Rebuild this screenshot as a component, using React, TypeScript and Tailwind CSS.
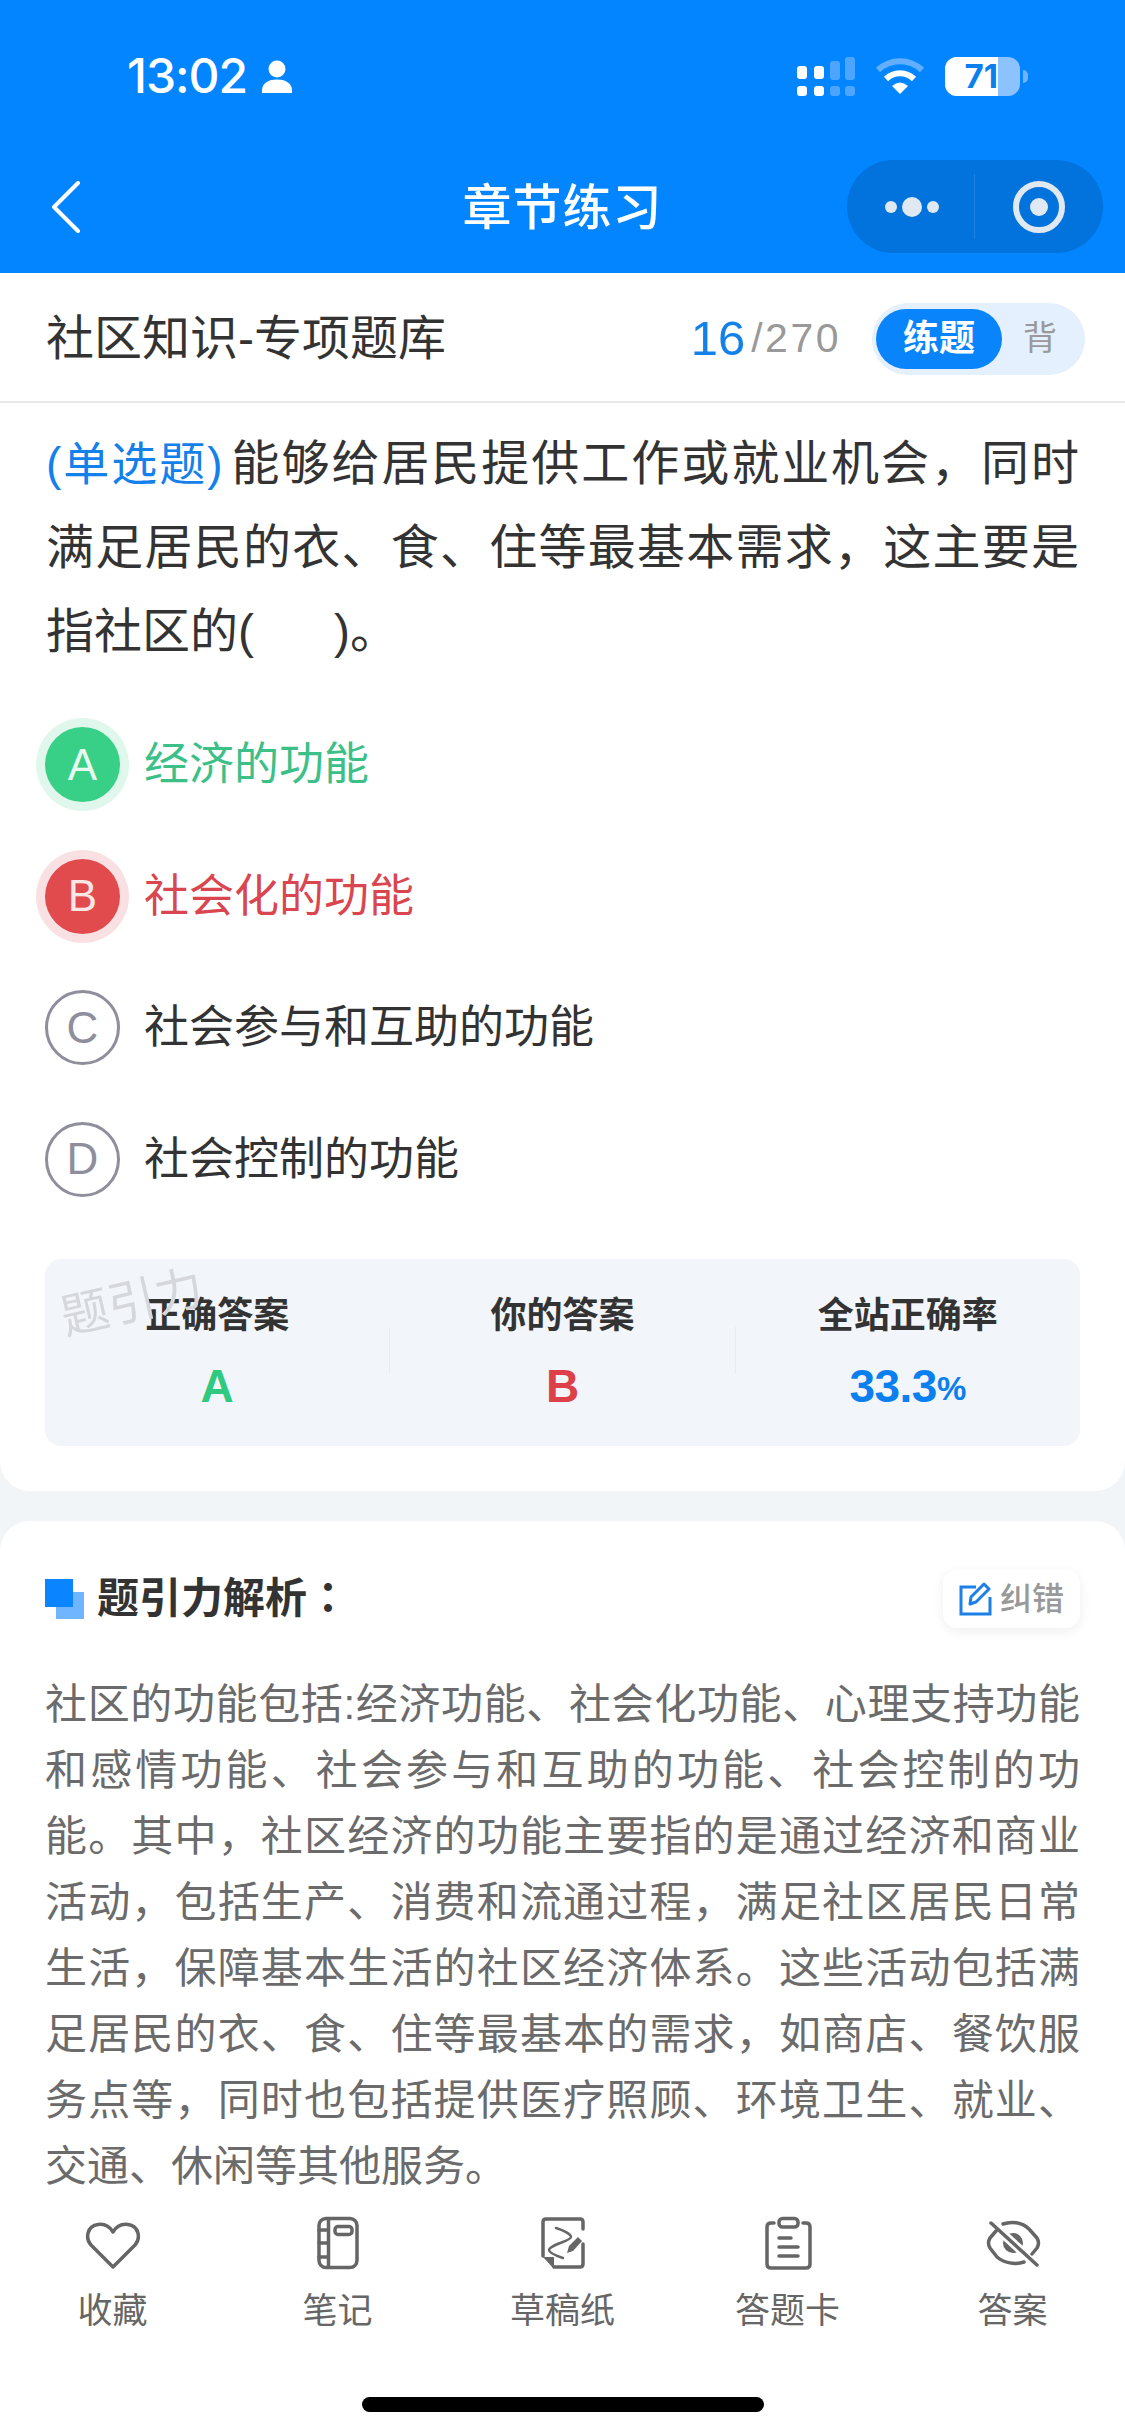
const options = [
    { key: "A", text: "经济的功能", state: "right" },
    { key: "B", text: "社会化的功能", state: "wrong" },
    { key: "C", text: "社会参与和互助的功能", state: "idle" },
    { key: "D", text: "社会控制的功能", state: "idle" },
];

const COMMA = "\uFF0C";
const COLON = "\uFF1A";

const question = `能够给居民提供工作或就业机会${COMMA}同时满足居民的衣、食、住等最基本需求${COMMA}这主要是指社区的(\u00A0\u00A0\u00A0\u00A0\u00A0\u00A0)。`;

const explanation = `社区的功能包括:经济功能、社会化功能、心理支持功能和感情功能、社会参与和互助的功能、社会控制的功能。其中${COMMA}社区经济的功能主要指的是通过经济和商业活动${COMMA}包括生产、消费和流通过程${COMMA}满足社区居民日常生活${COMMA}保障基本生活的社区经济体系。这些活动包括满足居民的衣、食、住等最基本的需求${COMMA}如商店、餐饮服务点等${COMMA}同时也包括提供医疗照顾、环境卫生、就业、交通、休闲等其他服务。`;

const StatusBar = () => (
    <div className="flex h-[40px] items-center justify-between pl-[127px] pr-[105px]">
        <div className="flex items-center gap-[14px]">
            <span className="font-['Inter',sans-serif] text-[48px] leading-[40px] font-medium tracking-[-1px] text-white">13:02</span>
            <svg width="32" height="33" viewBox="0 0 32 33" fill="#fff">
                <circle cx="16" cy="9" r="8.5" />
                <path d="M1 33 C0 24 6 19.5 16 19.5 C26 19.5 32 24 31 33 Z" />
            </svg>
        </div>
        <div className="flex items-center">
            <svg width="58" height="39" viewBox="0 0 58 39" className="mr-[20px]">
                <rect x="0" y="9" width="10" height="13" rx="3" fill="#fff" />
                <rect x="0" y="29" width="10" height="10" rx="3" fill="#fff" />
                <rect x="17" y="9" width="10" height="13" rx="3" fill="#fff" />
                <rect x="17" y="29" width="10" height="10" rx="3" fill="#fff" />
                <rect x="33" y="4" width="10" height="19" rx="3" fill="#4ea5ff" />
                <rect x="33" y="29" width="10" height="10" rx="3" fill="#4ea5ff" />
                <rect x="48" y="0" width="10" height="23" rx="3" fill="#4ea5ff" />
                <rect x="48" y="29" width="10" height="10" rx="3" fill="#4ea5ff" />
            </svg>
            <svg width="50" height="36" viewBox="0 0 50 36" fill="none" className="mr-[20px]">
                <path d="M3 12 A32 32 0 0 1 47 12" stroke="#62aeff" strokeWidth="6" />
                <path d="M11 21 A20 20 0 0 1 39 21" stroke="#fff" strokeWidth="6" />
                <path d="M17 28 Q25 21 33 28 L25 36 Z" fill="#fff" />
            </svg>
            <div className="relative h-[39px] w-[75px] overflow-visible rounded-[12px] bg-[#8cc3ff]">
                <div className="flex h-full w-[53px] items-center justify-end rounded-l-[12px] bg-white">
                    <span className="font-['Inter',sans-serif] text-[33px] leading-none font-bold text-[#0b7fee]">71</span>
                </div>
                <div className="absolute top-[13px] right-[-8px] h-[13px] w-[5px] rounded-r-full bg-[#6fb4ff]"></div>
            </div>
        </div>
    </div>
);

const Header = () => (
    <header className="h-[273px] bg-[#0285ff] pt-[56px]">
        <StatusBar />
        <div className="mt-[64px] grid h-[93px] grid-cols-[1fr_auto_1fr] items-center">
            <div className="pl-[50px]">
                <svg width="30" height="52" viewBox="0 0 30 52" fill="none">
                    <path d="M28 2 L4 26 L28 50" stroke="#fff" strokeWidth="4" strokeLinecap="round" strokeLinejoin="round" />
                </svg>
            </div>
            <h1 className="pt-[5px] text-[49px] font-medium tracking-[1px] text-white">章节练习</h1>
            <div className="flex justify-end pr-[22px]">
                <div className="flex h-[93px] w-[256px] items-center rounded-full bg-[#0272dd]">
                    <div className="flex h-[65px] w-[128px] items-center justify-center gap-[5px] border-r border-[#1d83e6] pl-[2px]">
                        <span className="h-[12px] w-[12px] rounded-full bg-[#e0e8f2]"></span>
                        <span className="h-[20px] w-[20px] rounded-full bg-[#e0e8f2]"></span>
                        <span className="h-[12px] w-[12px] rounded-full bg-[#e0e8f2]"></span>
                    </div>
                    <div className="flex flex-1 items-center justify-center">
                        <div className="flex h-[52px] w-[52px] items-center justify-center rounded-full border-[6px] border-[#e0e8f2]">
                            <span className="h-[18px] w-[18px] rounded-full bg-[#e0e8f2]"></span>
                        </div>
                    </div>
                </div>
            </div>
        </div>
    </header>
);

const SubHeader = () => (
    <div className="flex h-[130px] items-center justify-between border-b-2 border-[#e8e8e8] bg-white pt-[3px] pr-[40px] pl-[46px]">
        <span className="text-[48px] text-[#333]">社区知识-专项题库</span>
        <div className="flex items-center">
            <span className="text-[49px] leading-none text-[#1480ea]">16</span>
            <span className="ml-[6px] text-[41px] leading-none tracking-[2.5px] text-[#999]">/270</span>
            <div className="ml-[31px] flex h-[72px] w-[213px] items-center rounded-full bg-[#e4f0fd] pl-[4px]">
                <span className="flex h-[60px] w-[126px] items-center justify-center rounded-full bg-[#0a84fb] text-[36px] font-bold text-white">练题</span>
                <span className="ml-[21px] text-[34px] text-[#999]">背</span>
            </div>
        </div>
    </div>
);

const OptionRow = ({ option }: { option: (typeof options)[number] }) => {
    let circle = "border-[3px] border-[#8e8e9c] text-[#8e8e9c]";
    let label = "text-[#333]";
    if (option.state === "right") {
        circle = "bg-[#37d086] text-[#e6faf0] shadow-[0_0_0_9px_#e0f7ec]";
        label = "text-[#3cc088]";
    }
    if (option.state === "wrong") {
        circle = "bg-[#e14b4d] text-[#fbe6e6] shadow-[0_0_0_9px_#f9e1e3]";
        label = "text-[#d9464f]";
    }
    return (
        <div className="flex h-[131.5px] items-center pl-[45px]">
            <span className={`flex h-[75px] w-[75px] shrink-0 items-center justify-center rounded-full text-[44px] ${circle}`}>{option.key}</span>
            <span className={`ml-[24px] text-[45px] ${label}`}>{option.text}</span>
        </div>
    );
};

const Stat = ({ title, children }: { title: string; children: React.ReactNode }) => (
    <div className="flex flex-col items-center pt-[37px]">
        <span className="text-[36px] leading-[40px] font-bold text-[#333]">{title}</span>
        <div className="mt-[25px] flex h-[50px] items-center font-bold">{children}</div>
    </div>
);

const QuestionCard = () => (
    <section className="rounded-b-[30px] bg-white pb-[45px]">
        <p className="px-[46px] pt-[19px] text-justify text-[48px] leading-[84px] text-[#333]">
            <span className="mr-[7px] text-[46px] text-[#1480ea]">(单选题)</span>{question}
        </p>
        <div className="mt-[25px]">
            {options.map((option) => (
                <OptionRow key={option.key} option={option} />
            ))}
        </div>
        <div className="relative mx-[45px] mt-[34px] grid h-[187px] grid-cols-[1fr_1px_1fr_1px_1fr] rounded-[16px] bg-[#f2f5f9]">
            <span className="absolute top-[14px] left-[15px] rotate-[-13deg] text-[48px] leading-[60px] text-[#d5d7db]">题引力</span>
            <Stat title="正确答案">
                <span className="text-[46px] text-[#2fc97f]">A</span>
            </Stat>
            <div className="mt-[68px] h-[47px] bg-[#e9edf1]"></div>
            <Stat title="你的答案">
                <span className="text-[46px] text-[#dd4049]">B</span>
            </Stat>
            <div className="mt-[68px] h-[47px] bg-[#e9edf1]"></div>
            <Stat title="全站正确率">
                <span className="text-[46px] tracking-[-0.5px] text-[#0a7fee]">33.3</span>
                <span className="mt-[6px] text-[33px] font-semibold text-[#0a7fee]">%</span>
            </Stat>
        </div>
    </section>
);

const AnalysisCard = () => (
    <section className="mt-[30px] h-[700px] rounded-t-[30px] bg-white px-[45px] pt-[48px]">
        <div className="flex h-[60px] items-center justify-between">
            <div className="flex items-center">
                <svg width="39" height="40" viewBox="0 0 39 40">
                    <rect x="11" y="13" width="28" height="27" fill="#70b5ff" />
                    <rect x="0" y="0" width="28" height="28" fill="#0a84ff" />
                </svg>
                <h2 className="ml-[13px] pb-[5px] text-[42px] font-bold text-[#333]">
                    题引力解析<span className="font-['Noto_Sans_CJK_TC',sans-serif]">{COLON}</span>
                </h2>
            </div>
            <button className="flex h-[58px] w-[137px] items-center justify-center gap-[8px] rounded-[14px] bg-white shadow-[0_3px_12px_rgba(0,0,0,0.07)]">
                <svg width="33" height="34" viewBox="0 0 33 34" fill="none" stroke="#1c80e8" strokeWidth="3">
                    <path d="M17 5 H2 V32 H31 V15" />
                    <path d="M11 22 L12 15 L25 2 L30 7 L17 20 Z" strokeLinejoin="round" />
                </svg>
                <span className="text-[32px] font-medium text-[#999]">纠错</span>
            </button>
        </div>
        <p className="mt-[43px] text-justify text-[42px] leading-[66px] text-[#6b6b6b]">{explanation}</p>
    </section>
);

const stroke = { fill: "none", stroke: "#666", strokeWidth: 3.5, strokeLinecap: "round", strokeLinejoin: "round" } as const;

const tabs = [
    {
        label: "收藏",
        icon: <path {...stroke} d="M28 51 L6 29 C0 22 2 10 13 8.5 C20 7.5 25 11 28 16 C31 11 36 7.5 43 8.5 C54 10 56 22 50 29 Z" />,
    },
    {
        label: "笔记",
        icon: (
            <g {...stroke}>
                <rect x="9" y="2.5" width="38" height="49" rx="7" />
                <path d="M18.5 3 V51 M9 14 H18.5 M9 27 H18.5 M9 41 H18.5" />
                <rect x="25" y="10.5" width="17" height="8" rx="3" />
            </g>
        ),
    },
    {
        label: "草稿纸",
        icon: (
            <g>
                <path {...stroke} d="M8 40 V6 Q8 3 11 3 H45 Q48 3 48 6 V13 M48 28 V48 Q48 51 45 51 H19" />
                <path d="M8 41 H19 V53 Z" fill="#666" />
                <path {...stroke} strokeWidth={2.5} d="M21 12 C28 14 36 18 36 21 C36 25 14 29 14 34 C14 37 22 40 28 42" />
                <path d="M32 37 L34 30 L43 21 L47 25 L38 35 Z" fill="#666" />
            </g>
        ),
    },
    {
        label: "答题卡",
        icon: (
            <g {...stroke}>
                <path d="M14 7 H11 Q7 7 7 11 V48 Q7 52 11 52 H46 Q50 52 50 48 V11 Q50 7 46 7 H43" />
                <rect x="19" y="2.5" width="19" height="8.5" rx="3.5" />
                <path d="M19 22 H31 M19 31 H38 M19 40 H38" />
            </g>
        ),
    },
    {
        label: "答案",
        icon: (
            <g>
                <circle cx="28" cy="27" r="10" fill="#666" />
                <path d="M6 7 L52 49" stroke="#fff" strokeWidth="9" />
                <path {...stroke} d="M18 8 C26 5 37 6 44 13 L52 22 Q55 27 52 32 L47 38 M39 46 C30 49 19 47 12 41 L5 32 Q2 27 5 22 L11 15 M6 7 L52 49" />
            </g>
        ),
    },
];

const BottomBar = () => (
    <footer className="h-[244px] shrink-0 bg-white pt-[24px]">
        <div className="grid grid-cols-5">
            {tabs.map((tab) => (
                <div key={tab.label} className="flex flex-col items-center">
                    <svg width="56" height="56" viewBox="0 0 56 56">{tab.icon}</svg>
                    <span className="mt-[19px] text-[35px] leading-[40px] text-[#666]">{tab.label}</span>
                </div>
            ))}
        </div>
        <div className="mx-auto mt-[66px] h-[15px] w-[402px] rounded-full bg-black"></div>
    </footer>
);

export default function App() {
    return (
        <div className="flex h-[2436px] w-[1125px] flex-col overflow-hidden bg-[#f2f5f8] font-['Liberation_Sans','Noto_Sans_CJK_SC',sans-serif]">
            <Header />
            <SubHeader />
            <main className="min-h-0 flex-1 overflow-hidden bg-[#f2f5f8]">
                <QuestionCard />
                <AnalysisCard />
            </main>
            <BottomBar />
        </div>
    );
}
